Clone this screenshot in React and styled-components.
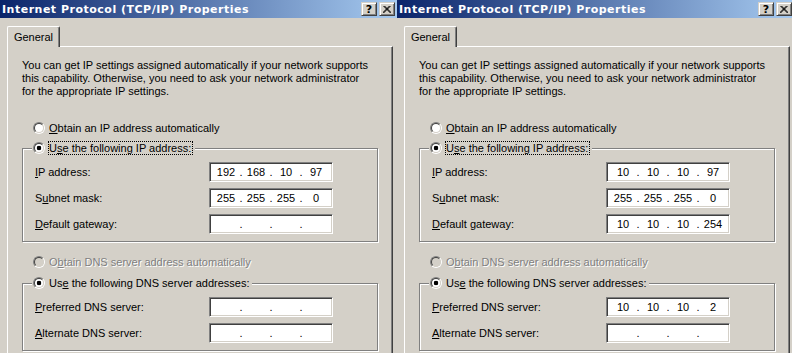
import React from 'react';
import styled, { createGlobalStyle } from 'styled-components';

const FACE = '#D4D0C8';

const GlobalStyle = createGlobalStyle`
  html, body {
    margin: 0;
    padding: 0;
    background: ${FACE};
  }
  body {
    font-family: "Liberation Sans", Arial, sans-serif;
    font-size: 11px;
    color: #000;
  }
`;

// --- window chrome ---
const Screen = styled.div`
  display: flex;
  width: 792px;
  height: 353px;
  overflow: hidden;
`;

const Dialog = styled.div`
  flex: none;
  width: 397px;
  display: flex;
  flex-direction: column;
  background: ${FACE};
`;

const TitleBar = styled.div`
  height: 18px;
  display: flex;
  align-items: center;
  padding: 0 2px;
  background: linear-gradient(to right, #0a246a, #a6caf0);
`;

const Title = styled.span`
  flex: 1;
  color: #fff;
  font-family: "DejaVu Sans", sans-serif;
  font-weight: bold;
  font-size: 11px;
  letter-spacing: 0.5px;
  white-space: nowrap;
`;

const CaptionButton = styled.div`
  box-sizing: border-box;
  width: 16px;
  height: 14px;
  margin-left: ${p => p.$gap || 0}px;
  display: flex;
  align-items: center;
  justify-content: center;
  background: ${FACE};
  border: 1px solid;
  border-color: ${FACE} #404040 #404040 ${FACE};
  box-shadow: inset 1px 1px 0 #fff, inset -1px -1px 0 #808080;
  font-family: "DejaVu Sans", sans-serif;
  font-weight: bold;
  font-size: 11px;
  line-height: 1;
`;

// --- tab control ---
const Body = styled.div`
  flex: 1;
  display: flex;
  flex-direction: column;
  padding: 8px 4px 0 7px;
`;

const Tab = styled.div`
  position: relative;
  z-index: 1;
  box-sizing: border-box;
  width: 53px;
  height: 21px;
  margin-bottom: -1px;
  display: flex;
  align-items: center;
  justify-content: center;
  padding-bottom: 1px;
  background: ${FACE};
  border-top: 1px solid #fff;
  border-left: 1px solid #fff;
  border-right: 1px solid #404040;
  border-top-left-radius: 2px;
  border-top-right-radius: 2px;
  box-shadow: inset -1px 0 0 #808080;
`;

const Panel = styled.div`
  flex: 1;
  padding: 12px 14px 0 14px;
  border-top: 1px solid #fff;
  border-left: 1px solid #fff;
  border-right: 1px solid #404040;
  box-shadow: inset -1px 0 0 #808080;
`;

const Intro = styled.p`
  margin: 0;
  line-height: 13px;
  white-space: nowrap;
`;

// --- radio options ---
const OptionRow = styled.div`
  display: flex;
  align-items: center;
  height: 14px;
  margin-top: ${p => p.$mt || 0}px;
  padding-left: 11px;
`;

const Radio = styled.span`
  flex: none;
  box-sizing: border-box;
  width: 12px;
  height: 12px;
  border-radius: 50%;
  border: 1px solid;
  border-color: #808080 #fff #fff #808080;
  display: flex;
  align-items: center;
  justify-content: center;

  &::before {
    content: '';
    box-sizing: border-box;
    width: 10px;
    height: 10px;
    border-radius: 50%;
    border: 1px solid;
    border-color: #404040 ${FACE} ${FACE} #404040;
    background: ${p =>
      p.$disabled
        ? FACE
        : p.$checked
        ? 'radial-gradient(circle, #000 0 2px, #fff 2.6px)'
        : '#fff'};
  }
`;

const OptionText = styled.span`
  margin-left: 4px;
  white-space: nowrap;
  line-height: 12px;
  color: ${p => (p.$disabled ? '#808080' : '#000')};
  text-shadow: ${p => (p.$disabled ? '1px 1px 0 #fff' : 'none')};
`;

const FocusText = styled.span`
  margin-left: 3px;
  padding: 0 1px 0 0;
  line-height: 12px;
  white-space: nowrap;
  border: 1px dotted #000;
`;

// --- group boxes ---
const Group = styled.div`
  margin-top: ${p => p.$mt}px;
  padding: 0 12px 7px 12px;
  border: 1px solid #808080;
  box-shadow: 1px 1px 0 #fff, inset 1px 1px 0 #fff;
`;

const Legend = styled.div`
  display: flex;
  align-items: center;
  width: fit-content;
  height: 14px;
  margin: -8px 0 0 -3px;
  padding: 0 2px 0 1px;
  background: ${FACE};
`;

const FieldList = styled.div`
  display: flex;
  flex-direction: column;
  gap: 6px;
  margin-top: 7px;
`;

const FieldRow = styled.div`
  display: flex;
  align-items: center;
`;

const FieldLabel = styled.span`
  width: 174px;
  white-space: nowrap;
`;

const IpBox = styled.div`
  box-sizing: border-box;
  width: 124px;
  height: 20px;
  display: flex;
  align-items: center;
  padding-left: 4px;
  background: #fff;
  border: 1px solid;
  border-color: #808080 #fff #fff #808080;
  box-shadow: inset 1px 1px 0 #404040, inset -1px -1px 0 ${FACE};
`;

const Octet = styled.span`
  width: 24px;
  text-align: center;
`;

const Dot = styled.span`
  width: 6px;
  text-align: center;
`;

const IpField = ({ value = ['', '', '', ''] }) => (
  <IpBox>
    {value.map((part, i) => (
      <React.Fragment key={i}>
        {i > 0 && <Dot>.</Dot>}
        <Octet>{part}</Octet>
      </React.Fragment>
    ))}
  </IpBox>
);

const CloseGlyph = () => (
  <svg width="8" height="7" viewBox="0 0 8 7">
    <path d="M0.5 0 L7.5 7 M1.5 0 L8.5 7 M7.5 0 L0.5 7 M6.5 0 L-0.5 7" stroke="#000" strokeWidth="1" />
  </svg>
);

const u = ch => <u>{ch}</u>;

const PropertiesDialog = ({ ip, mask, gateway, dns1, dns2 }) => (
  <Dialog>
    <TitleBar>
      <Title>Internet Protocol (TCP/IP) Properties</Title>
      <CaptionButton>?</CaptionButton>
      <CaptionButton $gap={2}>
        <CloseGlyph />
      </CaptionButton>
    </TitleBar>
    <Body>
      <Tab>General</Tab>
      <Panel>
        <Intro>
          You can get IP settings assigned automatically if your network supports
          <br />
          this capability. Otherwise, you need to ask your network administrator
          <br />
          for the appropriate IP settings.
        </Intro>

        <OptionRow $mt={23}>
          <Radio />
          <OptionText>{u('O')}btain an IP address automatically</OptionText>
        </OptionRow>

        <Group $mt={13}>
          <Legend>
            <Radio $checked />
            <FocusText>U{u('s')}e the following IP address:</FocusText>
          </Legend>
          <FieldList>
            <FieldRow>
              <FieldLabel>{u('I')}P address:</FieldLabel>
              <IpField value={ip} />
            </FieldRow>
            <FieldRow>
              <FieldLabel>S{u('u')}bnet mask:</FieldLabel>
              <IpField value={mask} />
            </FieldRow>
            <FieldRow>
              <FieldLabel>{u('D')}efault gateway:</FieldLabel>
              <IpField value={gateway} />
            </FieldRow>
          </FieldList>
        </Group>

        <OptionRow $mt={13}>
          <Radio $disabled />
          <OptionText $disabled>O{u('b')}tain DNS server address automatically</OptionText>
        </OptionRow>

        <Group $mt={14}>
          <Legend>
            <Radio $checked />
            <OptionText>Us{u('e')} the following DNS server addresses:</OptionText>
          </Legend>
          <FieldList>
            <FieldRow>
              <FieldLabel>{u('P')}referred DNS server:</FieldLabel>
              <IpField value={dns1} />
            </FieldRow>
            <FieldRow>
              <FieldLabel>{u('A')}lternate DNS server:</FieldLabel>
              <IpField value={dns2} />
            </FieldRow>
          </FieldList>
        </Group>
      </Panel>
    </Body>
  </Dialog>
);

const App = () => (
  <>
    <GlobalStyle />
    <Screen>
      <PropertiesDialog
        ip={['192', '168', '10', '97']}
        mask={['255', '255', '255', '0']}
      />
      <PropertiesDialog
        ip={['10', '10', '10', '97']}
        mask={['255', '255', '255', '0']}
        gateway={['10', '10', '10', '254']}
        dns1={['10', '10', '10', '2']}
      />
    </Screen>
  </>
);

export default App;
